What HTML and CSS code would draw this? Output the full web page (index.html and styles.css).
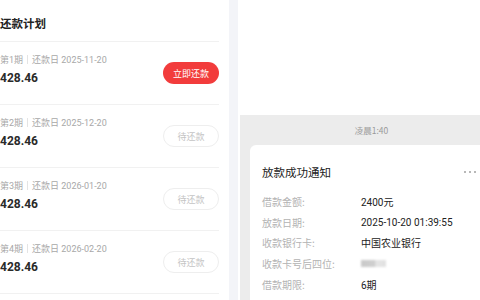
FILE: index.html
```html
<!DOCTYPE html>
<html lang="zh">
<head>
<meta charset="utf-8">
<link rel="stylesheet" href="styles.css">
</head>
<body>
<div class="page">
  <section class="plan">
    <div class="plan-head">还款计划</div>
    <div class="row">
      <div class="info">
        <div class="meta">第1期<span class="sep"></span>还款日 2025-11-20</div>
        <div class="amount">428.46</div>
      </div>
      <div class="btn btn-pay">立即还款</div>
    </div>
    <div class="row">
      <div class="info">
        <div class="meta">第2期<span class="sep"></span>还款日 2025-12-20</div>
        <div class="amount">428.46</div>
      </div>
      <div class="btn btn-wait">待还款</div>
    </div>
    <div class="row">
      <div class="info">
        <div class="meta">第3期<span class="sep"></span>还款日 2026-01-20</div>
        <div class="amount">428.46</div>
      </div>
      <div class="btn btn-wait">待还款</div>
    </div>
    <div class="row">
      <div class="info">
        <div class="meta">第4期<span class="sep"></span>还款日 2026-02-20</div>
        <div class="amount">428.46</div>
      </div>
      <div class="btn btn-wait">待还款</div>
    </div>
  </section>
  <div class="strip"></div>
  <div class="gutter"></div>
  <section class="chat">
    <div class="chat-top"></div>
    <div class="chat-body">
      <div class="time">凌晨1:40</div>
      <div class="card">
        <div class="card-head">
          <span class="card-title">放款成功通知</span>
          <span class="dots"><i></i><i></i><i></i></span>
        </div>
        <div class="kv"><span class="k">借款金额:</span><span class="v">2400元</span></div>
        <div class="kv"><span class="k">放款日期:</span><span class="v">2025-10-20 01:39:55</span></div>
        <div class="kv"><span class="k">收款银行卡:</span><span class="v">中国农业银行</span></div>
        <div class="kv"><span class="k">收款卡号后四位:</span><span class="v"><span class="blur"></span></span></div>
        <div class="kv"><span class="k">借款期限:</span><span class="v">6期</span></div>
      </div>
    </div>
  </section>
</div>
</body>
</html>
```

FILE: styles.css
```css
* { box-sizing: border-box; }
html, body { margin: 0; padding: 0; }
body {
  width: 480px;
  height: 300px;
  overflow: hidden;
  background: #ffffff;
  font-family: Roboto, "Noto Sans CJK SC", sans-serif;
}
.page {
  display: flex;
  width: 480px;
  height: 300px;
  overflow: hidden;
}
.plan {
  width: 229px;
  flex: none;
  background: #ffffff;
  padding-right: 10px;
  overflow: hidden;
}
.plan-head {
  height: 42px;
  padding-top: 5px;
  display: flex;
  align-items: center;
  font-family: "Noto Sans CJK SC", sans-serif;
  font-size: 11.5px;
  font-weight: 700;
  color: #222;
  border-bottom: 1px solid #f1f1f1;
}
.row {
  height: 63px;
  display: flex;
  align-items: center;
  justify-content: space-between;
  border-bottom: 1px solid #f1f1f1;
}
.info {
  align-self: flex-start;
  padding-top: 10px;
}
.meta {
  display: flex;
  align-items: center;
  height: 14px;
  font-size: 9px;
  color: #a8a8a8;
  font-family: Roboto, "Noto Sans CJK SC", sans-serif;
}
.sep {
  width: 1px;
  height: 9px;
  background: #e4e4e4;
  margin: 0 4px;
}
.amount {
  margin-top: 2px;
  height: 20px;
  line-height: 20px;
  font-size: 12px;
  font-weight: 700;
  color: #2a2a2a;
}
.btn {
  width: 56px;
  height: 22px;
  border-radius: 11px;
  display: flex;
  align-items: center;
  justify-content: center;
  font-family: "Noto Sans CJK SC", sans-serif;
  font-size: 9px;
}
.btn-pay {
  background: #f23c3c;
  color: #ffffff;
}
.btn-wait {
  border: 1px solid #eeeeee;
  color: #c4c4c4;
}
.strip {
  width: 9px;
  flex: none;
  background: #f3f4f8;
}
.gutter {
  width: 2px;
  flex: none;
  background: #ffffff;
}
.chat {
  flex: 1;
  display: flex;
  flex-direction: column;
  overflow: hidden;
}
.chat-top {
  height: 115px;
  flex: none;
  background: #ffffff;
}
.chat-body {
  flex: 1;
  display: flex;
  flex-direction: column;
  background: #ececec;
  padding-left: 10px;
}
.time {
  height: 30px;
  flex: none;
  display: flex;
  align-items: center;
  justify-content: center;
  padding-left: 13px;
  font-family: "Noto Sans CJK SC", sans-serif;
  font-size: 8.5px;
  color: #9a9a9a;
}
.card {
  flex: 1;
  background: #ffffff;
  border-radius: 6px 0 0 0;
  padding: 17px 4px 0 12px;
  font-family: "Noto Sans CJK SC", sans-serif;
}
.card-head {
  height: 20px;
  display: flex;
  align-items: center;
  justify-content: space-between;
  margin-bottom: 9px;
}
.card-title {
  font-size: 11.5px;
  color: #222;
}
.dots {
  display: flex;
  gap: 3px;
}
.dots i {
  display: block;
  width: 2px;
  height: 2px;
  background: #b8b8b8;
}
.kv {
  display: flex;
  align-items: center;
  height: 20.8px;
  font-size: 10px;
}
.k {
  width: 99px;
  flex: none;
  color: #b3b3b3;
}
.v {
  color: #222;
  display: flex;
  align-items: center;
  font-family: Roboto, "Noto Sans CJK SC", sans-serif;
}
.blur {
  display: block;
  width: 25px;
  height: 7px;
  background: linear-gradient(90deg, #c9c9c9 0%, #cfcfcf 55%, #e6e6e6 60%, #e0e0e0 100%);
  filter: blur(1px);
}
```
